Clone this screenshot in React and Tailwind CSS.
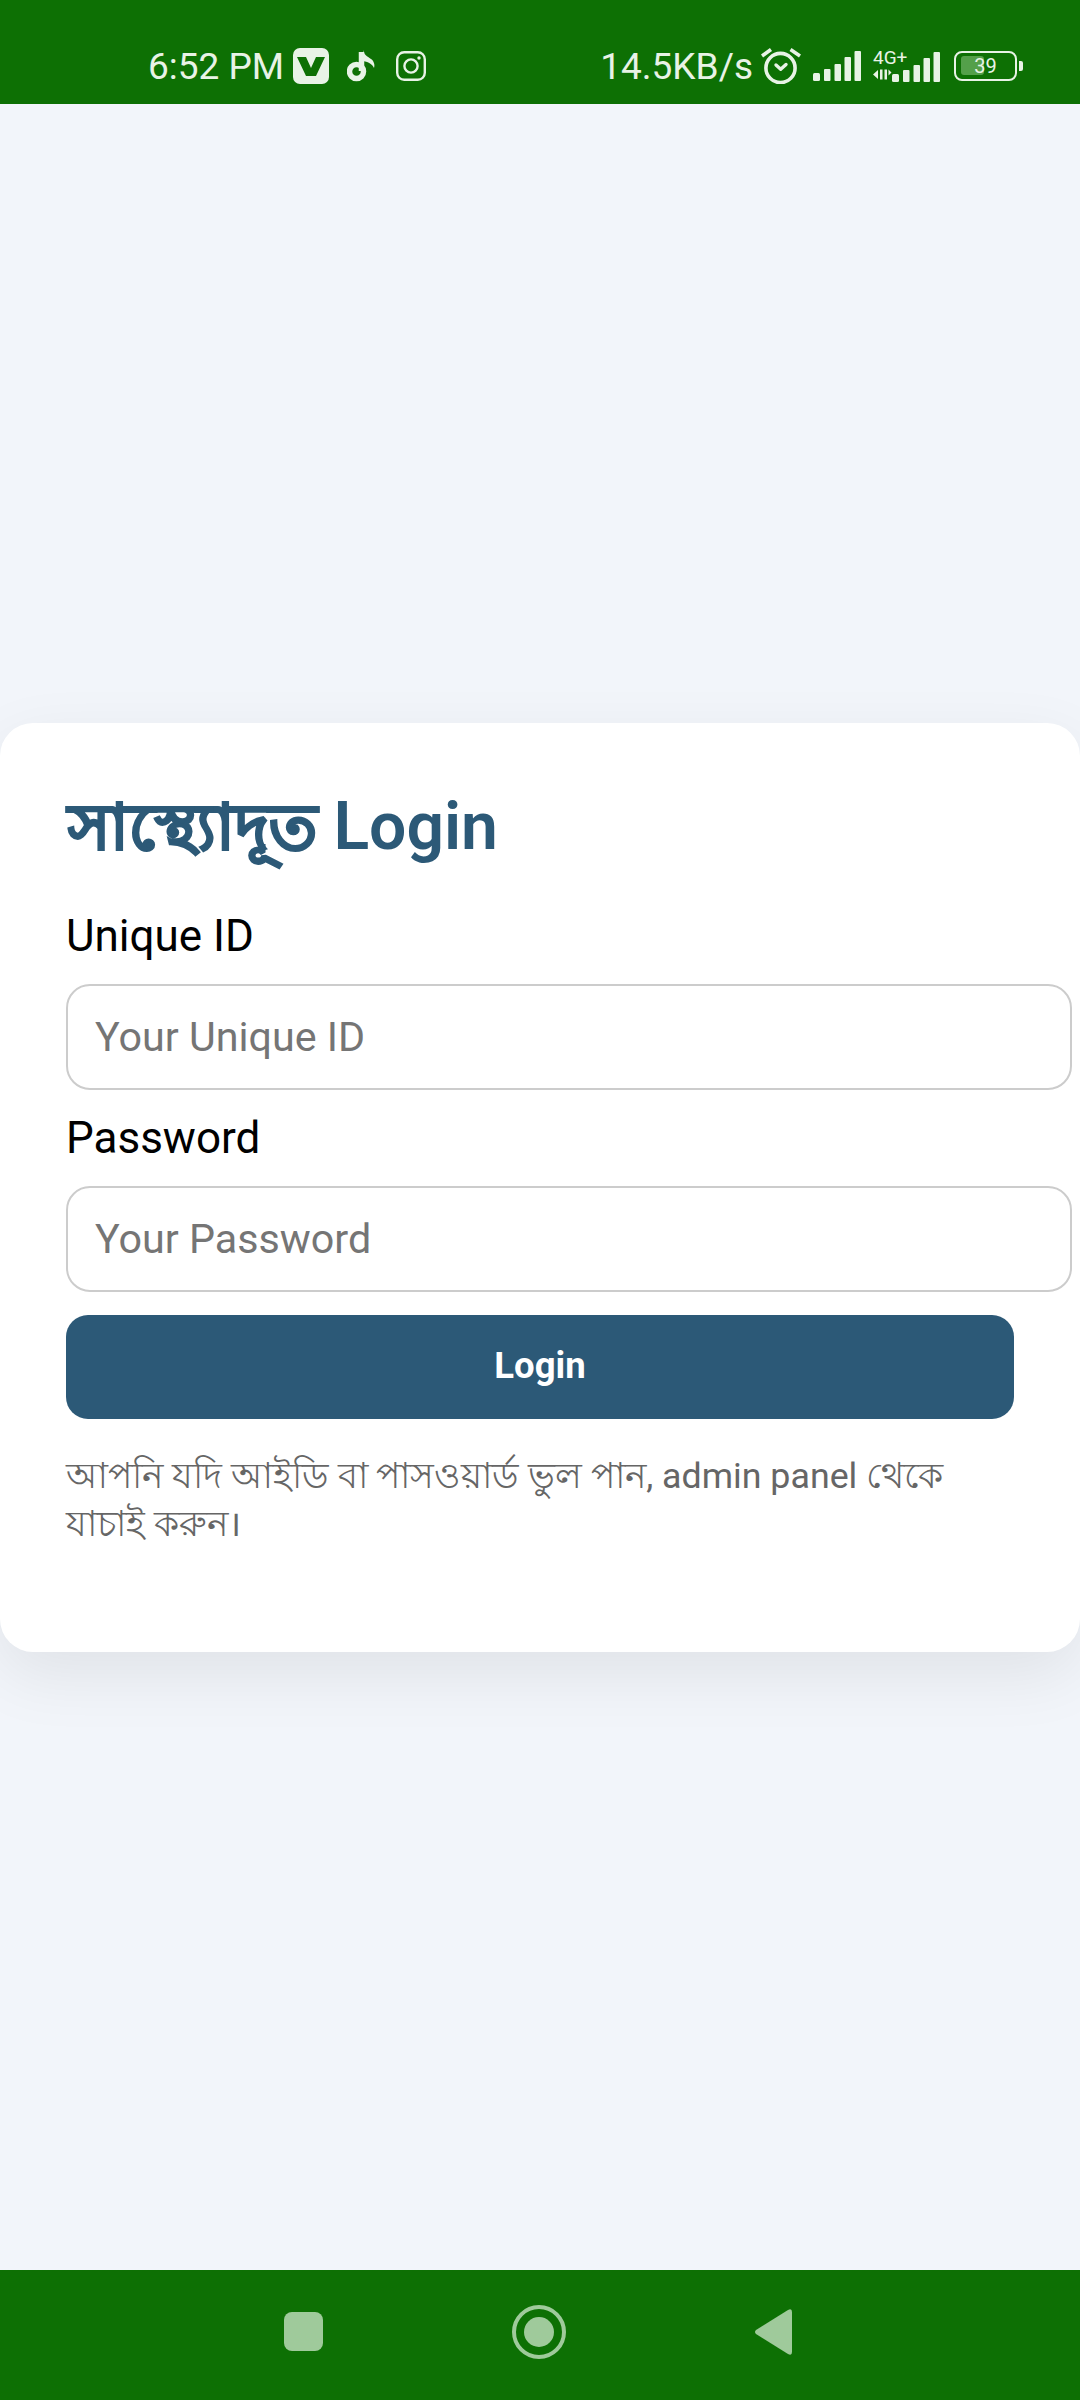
const StatusIcons = {
  Vpn: () => (
    <svg width="36" height="36" viewBox="0 0 36 36">
      <rect width="36" height="36" rx="7" fill="#e8f3e6" />
      <path d="M4 9h9l5 11 5-11h9L23 28H13z" fill="#0d7004" />
    </svg>
  ),
  Tiktok: () => (
    <svg width="30" height="32" viewBox="0 0 30 32" fill="none">
      <circle cx="9.5" cy="21.5" r="7" stroke="#e8f3e6" strokeWidth="5.5" />
      <path d="M14.5 21V2" stroke="#e8f3e6" strokeWidth="5.5" />
      <path d="M16 0c1 5 4 6 8 9 3 2 4 6 3 9-1-3-5-6-11-7z" fill="#e8f3e6" />
    </svg>
  ),
  Instagram: () => (
    <svg width="30" height="30" viewBox="0 0 30 30" fill="none" stroke="#e8f3e6">
      <rect x="1.2" y="1.2" width="27.6" height="27.6" rx="7" strokeWidth="2.4" />
      <circle cx="15" cy="15" r="6.6" strokeWidth="2.4" />
      <circle cx="23" cy="7" r="1.7" fill="#e8f3e6" stroke="none" />
    </svg>
  ),
  Alarm: () => (
    <svg width="40" height="36" viewBox="0 0 40 36" fill="none" stroke="#e8f3e6">
      <circle cx="19.5" cy="20" r="14.6" strokeWidth="3.6" />
      <path d="M15 17l4.7 4.3L25 16.5" strokeWidth="3.4" strokeLinecap="round" strokeLinejoin="round" />
      <path d="M1 8l9-6.5M39 8l-9.5-6.5" strokeWidth="3.6" />
    </svg>
  ),
}

const Bars = () => (
  <svg width="48" height="30" viewBox="0 0 48 30" fill="#e8f3e6">
    <rect x="0" y="22" width="7" height="8" rx="1.5" />
    <rect x="11" y="18" width="6.5" height="12" rx="1" />
    <rect x="21.5" y="13" width="6.5" height="17" rx="1" />
    <rect x="31.5" y="6" width="6.5" height="24" rx="1" />
    <rect x="41.5" y="0" width="6.5" height="30" rx="1" />
  </svg>
)

const NetworkBars = () => (
  <div className="relative h-[31px] w-[67px]">
    <svg width="67" height="31" viewBox="0 0 67 31" fill="#e8f3e6">
      <path d="M0 23.5l5-4.5v9zM7 18.5h2.5v10H7z" />
      <path d="M11.5 18.5H14v10h-2.5zM15.5 18.5l3 3-3 3z" />
      <g transform="translate(19 1)">
        <rect x="0" y="22" width="7" height="8" rx="1.5" />
        <rect x="11" y="18" width="6.5" height="12" rx="1" />
        <rect x="21.5" y="13" width="6.5" height="17" rx="1" />
        <rect x="31.5" y="6" width="6.5" height="24" rx="1" />
        <rect x="41.5" y="0" width="6.5" height="30" rx="1" />
      </g>
    </svg>
    <span className="absolute left-0 top-[-2px] text-[19px] leading-[18px]">4G+</span>
  </div>
)

const Battery = () => (
  <div className="flex items-center gap-[2px]">
    <div className="relative flex h-[30px] w-[63px] items-center justify-center rounded-[8px] border-[2.5px] border-[#e8f3e6]">
      <div className="absolute left-[5px] top-[3px] h-[19px] w-[23px] rounded-[3px] bg-[#54a04a]" />
      <span className="relative text-[20px] leading-none text-[#e8f3e6]">39</span>
    </div>
    <div className="h-[10px] w-[4px] rounded-r-[2px] bg-[#e8f3e6]" />
  </div>
)

export default function App() {
  return (
    <div className="flex h-[2400px] w-[1080px] flex-col overflow-hidden bg-[#f2f5fa] font-['Roboto','Noto_Sans',sans-serif]">
      {/* Status bar */}
      <div className="flex h-[104px] items-end justify-between bg-[#0d7004] pb-[19px] pl-[148px] pr-[57px] text-[#e8f3e6]">
        <div className="flex items-center">
          <span className="pt-[2px] text-[37px] leading-[36px]">6:52 PM</span>
          <span className="ml-[9px]"><StatusIcons.Vpn /></span>
          <span className="ml-[18px]"><StatusIcons.Tiktok /></span>
          <span className="ml-[19px]"><StatusIcons.Instagram /></span>
        </div>
        <div className="flex items-center">
          <span className="pt-[2px] text-[37px] leading-[36px]">14.5KB/s</span>
          <span className="ml-[8px]"><StatusIcons.Alarm /></span>
          <span className="ml-[12px]"><Bars /></span>
          <span className="ml-[12px]"><NetworkBars /></span>
          <span className="ml-[14px]"><Battery /></span>
        </div>
      </div>

      {/* Login card */}
      <div className="flex flex-1 items-center">
        <div className="h-[929px] w-full rounded-[33px] bg-white px-[66px] pt-[66px] shadow-[0_22px_66px_rgba(0,0,0,0.08)]">
          <h1 className="text-[66px] font-semibold leading-[76px] text-[#2c5977]">
            <span className="ml-[2px] text-[64px] [-webkit-text-stroke:2px_#2c5977]">সাস্থ্যোদূত</span> Login
          </h1>
          <form>
            <label className="mt-[44px] block text-[44px] leading-[52px] text-black">Unique ID</label>
            <input
              placeholder="Your Unique ID"
              className="mt-[22px] block h-[106px] w-[1006px] rounded-[24px] border-[2.5px] border-[#cccccc] px-[27px] text-[41.25px] outline-none placeholder:text-[#757575]"
            />
            <label className="mt-[22px] block text-[44px] leading-[52px] text-black">Password</label>
            <input
              type="password"
              placeholder="Your Password"
              className="mt-[22px] block h-[106px] w-[1006px] rounded-[24px] border-[2.5px] border-[#cccccc] px-[27px] text-[41.25px] outline-none placeholder:text-[#757575]"
            />
            <button
              type="button"
              className="mt-[23px] block h-[104px] w-full rounded-[22px] bg-[#2c5977] text-[36.5px] font-bold text-white"
            >
              Login
            </button>
          </form>
          <p className="mt-[33px] text-[35.75px] leading-[48px] text-[#666666]">
            আপনি যদি আইডি বা পাসওয়ার্ড ভুল পান, admin panel থেকে যাচাই করুন।
          </p>
        </div>
      </div>

      {/* Navigation bar */}
      <div className="flex h-[130px] items-start justify-center gap-[189px] bg-[#0d7004] pr-[4px] pt-[35px]">
        <div className="mt-[7px] h-[39px] w-[39px] rounded-[8px] bg-[#9fca9b]" />
        <div className="flex h-[54px] w-[54px] items-center justify-center rounded-full border-[4px] border-[#9fca9b]">
          <div className="h-[30px] w-[30px] rounded-full bg-[#9fca9b]" />
        </div>
        <svg width="37" height="46" viewBox="0 0 37 46" className="mt-[4px]">
          <path d="M1 21 L33 1 Q37 -1 37 3 V43 Q37 47 33 45 L1 25 Q-1 23 1 21z" fill="#9fca9b" />
        </svg>
      </div>
    </div>
  )
}
